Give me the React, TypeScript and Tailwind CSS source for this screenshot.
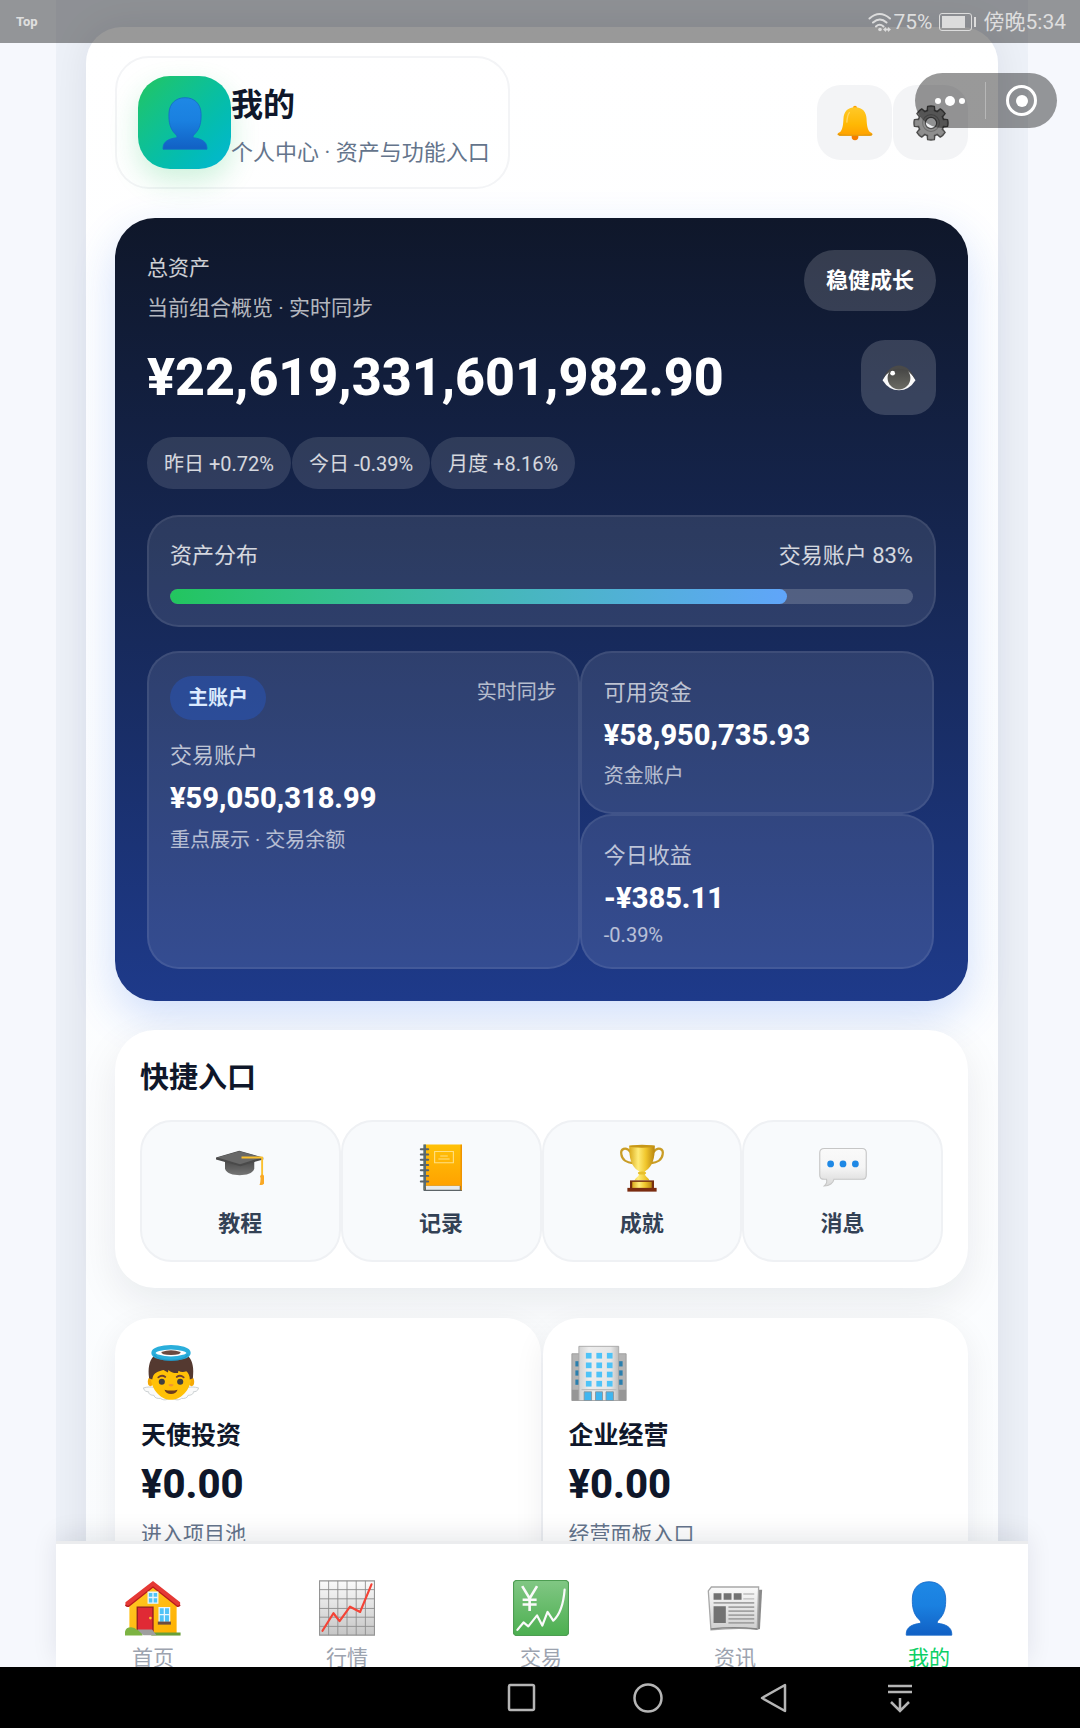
import React from "react";

type IconProps = { className?: string };

function PersonIcon({ className }: IconProps) {
  return (
    <svg viewBox="0 0 128 128" className={className} aria-hidden="true">
      <defs>
        <linearGradient id="person" x1="0" y1="0" x2="0" y2="1">
          <stop offset="0" stopColor="#1e88e5" />
          <stop offset=".45" stopColor="#1a80e0" />
          <stop offset="1" stopColor="#1160c4" />
        </linearGradient>
      </defs>
      <path
        d="M64 4c22 0 37 14 38 37 1 21-3 38-15 49-4 4-5 6-3 9 18 2 32 9 32 24v3H12v-3c0-15 14-22 32-24 2-3 1-5-3-9C29 79 25 62 26 41 27 18 42 4 64 4Z"
        fill="url(#person)"
        stroke="#1669c9"
        strokeWidth="2"
      />
    </svg>
  );
}

function BellIcon({ className }: IconProps) {
  return (
    <svg viewBox="0 0 128 128" className={className} aria-hidden="true">
      <defs>
        <linearGradient id="bell" x1="0" y1="0" x2="0" y2="1">
          <stop offset="0" stopColor="#ffc928" />
          <stop offset=".6" stopColor="#ffb804" />
          <stop offset="1" stopColor="#ffa000" />
        </linearGradient>
      </defs>
      <circle cx="64" cy="10" r="7" fill="#ffa000" />
      <circle cx="64" cy="113" r="12" fill="#f57c00" />
      <path
        d="M64 8c28 0 40 18 41 40 1 26 4 38 10 46 4 4 11 5 11 10 0 4-4 5-8 5H10c-4 0-8-1-8-5 0-5 7-6 11-10 6-8 9-20 10-46C24 26 36 8 64 8Z"
        fill="url(#bell)"
      />
      <path d="M3 102c20 5 102 5 122 0 1 5-3 7-7 7H10c-4 0-8-2-7-7Z" fill="#e09a10" />
      <path d="M44 27c-7 8-8 20-9 34" fill="none" stroke="#ffe082" strokeWidth="5" strokeLinecap="round" opacity=".7" />
    </svg>
  );
}

function GearIcon({ className }: IconProps) {
  const teeth = [0, 45, 90, 135, 180, 225, 270, 315];
  return (
    <svg viewBox="0 0 128 128" className={className} aria-hidden="true">
      <g fill="#858585" stroke="#4b4b4b" strokeWidth="5" strokeLinejoin="round">
        {teeth.map((a) => (
          <path key={a} d="M50 26 52 5q12-3 24 0l2 21Z" transform={`rotate(${a} 64 64)`} />
        ))}
        <circle cx="64" cy="64" r="46" />
      </g>
      <g fill="#8e8e8e">
        {teeth.map((a) => (
          <path key={a} d="M53 30 55 9h18l2 21Z" transform={`rotate(${a} 64 64)`} />
        ))}
      </g>
      <circle cx="64" cy="64" r="42" fill="#8e8e8e" />
      <circle cx="64" cy="64" r="30" fill="none" stroke="#707070" strokeWidth="4" />
      <circle cx="64" cy="64" r="20" fill="#f1f2f4" stroke="#505050" strokeWidth="4" />
    </svg>
  );
}

function EyeIcon({ className }: IconProps) {
  return (
    <svg viewBox="0 0 128 96" className={className} aria-hidden="true">
      <defs>
        <linearGradient id="iris" x1="0" y1="0" x2="0" y2="1">
          <stop offset="0" stopColor="#424242" />
          <stop offset="1" stopColor="#6b6b64" />
        </linearGradient>
      </defs>
      <path d="M2 56Q28 8 64 8t62 48Q102 94 64 94T2 56Z" fill="#fafafa" />
      <circle cx="64" cy="48" r="43" fill="url(#iris)" />
      <circle cx="40" cy="30" r="9" fill="#fff" />
      <path d="M2 54Q26 1 64 1t62 53Q102 14 64 13T2 54Z" fill="#4a4a49" />
    </svg>
  );
}

function GraduationIcon({ className }: IconProps) {
  return (
    <svg viewBox="0 0 128 128" className={className} aria-hidden="true">
      <defs>
        <linearGradient id="cap" x1="0" y1="0" x2="0" y2="1">
          <stop offset="0" stopColor="#424242" />
          <stop offset="1" stopColor="#757575" />
        </linearGradient>
      </defs>
      <path d="M24 38h78v28c-4 13-22 17-39 17S28 79 24 66Z" fill="url(#cap)" />
      <path d="M0 36 62 18l64 18v5L65 59 0 41Z" fill="#4a4a4a" />
      <path d="M4 36 62 19l60 17-58 18Z" fill="#686868" />
      <path d="M68 36h55v53" fill="none" stroke="#fbc02d" strokeWidth="5" strokeLinejoin="round" />
      <circle cx="123" cy="86" r="5" fill="#f9a825" />
      <path d="M119 86h9v20q-4 5-12 3 3-6 3-23Z" fill="#f9a825" />
    </svg>
  );
}

function NotebookIcon({ className }: IconProps) {
  const rings = [14, 28, 42, 56, 70, 85, 100];
  return (
    <svg viewBox="0 0 128 128" className={className} aria-hidden="true">
      <defs>
        <linearGradient id="book" x1="0" y1="0" x2="0" y2="1">
          <stop offset="0" stopColor="#ffc107" />
          <stop offset="1" stopColor="#ff9f00" />
        </linearGradient>
      </defs>
      <path d="M18 110h102v15H18Z" fill="#5d6468" />
      <path d="M24 111h90v11H24Z" fill="#e6eaec" />
      <path d="M18 1h102v110H24l-6 12Z" fill="url(#book)" />
      <path d="M17 1h7v110l-7 14Z" fill="#546e7a" />
      <path d="M116 2h4v121h-4Z" fill="#ef9300" />
      <g stroke="#5a6469" strokeWidth="5" strokeLinecap="round">
        {rings.map((y) => (
          <path key={y} d={`M10 ${y}h20`} />
        ))}
      </g>
      <path d="M47 20h50v30H47Z" fill="none" stroke="#ffe082" strokeWidth="3" />
      <path d="M62 32h20M57 40h30" stroke="#ffe082" strokeWidth="3" />
    </svg>
  );
}

function TrophyIcon({ className }: IconProps) {
  return (
    <svg viewBox="0 0 128 128" className={className} aria-hidden="true">
      <defs>
        <linearGradient id="gold" x1="0" y1="0" x2="1" y2="0">
          <stop offset="0" stopColor="#d9a91a" />
          <stop offset=".35" stopColor="#ffec78" />
          <stop offset=".65" stopColor="#f0c62c" />
          <stop offset="1" stopColor="#b98510" />
        </linearGradient>
      </defs>
      <g fill="none" stroke="#c99c25" strokeWidth="6">
        <path d="M34 22C20 4 6 14 9 28c2 14 15 22 30 23M94 22c14-18 28-8 25 6-2 14-15 22-30 23" />
      </g>
      <path d="M30 4h68c1 34-6 56-24 67-5 3-3 9 0 14 3 4 8 6 10 12H44c2-6 7-8 10-12 3-5 5-11 0-14C36 60 29 38 30 4Z" fill="url(#gold)" />
      <ellipse cx="64" cy="6" rx="34" ry="4" fill="#c79718" />
      <ellipse cx="64" cy="77" rx="11" ry="4" fill="#e8bf2c" />
      <path d="M32 97h64v24H32Z" fill="#78300f" />
      <path d="M25 117h78v10H25Z" fill="#7b2c10" />
      <path d="M38 101h52v16H38Z" fill="url(#gold)" />
    </svg>
  );
}

function SpeechIcon({ className }: IconProps) {
  return (
    <svg viewBox="0 0 128 128" className={className} aria-hidden="true">
      <defs>
        <linearGradient id="bubble" x1="0" y1="0" x2="0" y2="1">
          <stop offset="0" stopColor="#fafafa" />
          <stop offset=".5" stopColor="#f5f5f5" />
          <stop offset="1" stopColor="#d8d8d8" />
        </linearGradient>
      </defs>
      <path
        d="M14 12h101q11 0 11 11v60q0 11-11 11H40c-2 10-12 18-26 18 7-6 8-11 6-18h-6Q2 94 2 83V23q0-11 12-11Z"
        fill="url(#bubble)"
        stroke="#c6c6c6"
        strokeWidth="3"
      />
      <g fill="#1e88e5">
        <circle cx="31" cy="53" r="9" />
        <circle cx="64" cy="53" r="9" />
        <circle cx="97" cy="53" r="9" />
      </g>
    </svg>
  );
}

function AngelIcon({ className }: IconProps) {
  return (
    <svg viewBox="0 0 128 128" className={className} aria-hidden="true">
      <g fill="#fafafa" stroke="#c4c9cc" strokeWidth="2">
        <path d="M34 100C20 94 10 96 1 98c1 7 7 9 12 9-1 5 5 8 12 8 1 6 8 8 15 7 6 5 14 4 20 0Z" />
        <path d="M94 100c14-6 24-4 33-2-1 7-7 9-12 9 1 5-5 8-12 8-1 6-8 8-15 7-6 5-14 4-20 0Z" />
      </g>
      <ellipse cx="17" cy="84" rx="6" ry="10" fill="#f5a905" />
      <ellipse cx="111" cy="84" rx="6" ry="10" fill="#f5a905" />
      <path d="M17 62C17 34 34 20 64 20s47 14 47 42c2 37-22 63-47 63S15 99 17 62Z" fill="#ffc107" />
      <path d="M14 76C8 30 28 12 64 12s56 18 50 64l-7 3c0-8-3-15-8-19-7 3-13 2-18-1l-1 5c-9 1-17-2-22-7l-1 6-10-6c-8 2-19 5-23 12-2 4-2 6-3 10Z" fill="#543930" />
      <g fill="none" stroke="#6d4030" strokeWidth="4" strokeLinecap="round">
        <path d="M35 74q8-7 16-1M77 73q8-6 16 1" />
      </g>
      <circle cx="43" cy="84" r="7" fill="#404040" />
      <circle cx="85" cy="84" r="7" fill="#404040" />
      <path d="M58 91q6-4 12 0-1 4-6 4t-6-4Z" fill="#f19534" />
      <path d="M49 102q15 4 30 0-4 10-15 10t-15-10Z" fill="#6b3b1e" />
      <ellipse cx="64" cy="19" rx="35" ry="9" fill="#fff" />
      <path d="M42 16q22-8 44 0 1 7-22 7t-22-7Z" fill="#6a4a40" />
      <ellipse cx="64" cy="18" rx="40" ry="13" fill="none" stroke="#2aaedb" strokeWidth="10" />
      <path d="M25 22q10 13 39 13t39-13" fill="none" stroke="#1d93c4" strokeWidth="3" opacity=".7" />
    </svg>
  );
}

function OfficeIcon({ className }: IconProps) {
  return (
    <svg viewBox="0 0 128 128" className={className} aria-hidden="true">
      <defs>
        <linearGradient id="office" x1="0" y1="0" x2="1" y2="0">
          <stop offset="0" stopColor="#d2d2d2" />
          <stop offset=".25" stopColor="#ededed" />
          <stop offset=".8" stopColor="#e6e6e6" />
          <stop offset="1" stopColor="#bdbdbd" />
        </linearGradient>
      </defs>
      <path d="M2 20h124v107H2Z" fill="#b4b4b4" stroke="#9a9a9a" strokeWidth="2" />
      <path d="M2 102h124v25H2Z" fill="#969696" />
      <g fill="#2a7fae">
        {[37, 58, 79].map((y) => (
          <React.Fragment key={y}>
            <path d={`M10 ${y}h9v12h-9Z`} />
            <path d={`M109 ${y}h9v12h-9Z`} />
          </React.Fragment>
        ))}
      </g>
      <path d="M18 3h91v124H18Z" fill="url(#office)" stroke="#a5a5a5" strokeWidth="2" />
      <g fill="#4fc3f7">
        {[18, 40, 61, 82].map((y) =>
          [34, 58, 82].map((x) => <rect key={`${x}-${y}`} x={x} y={y} width="13" height="13" />)
        )}
      </g>
      <path d="M24 102h80" stroke="#bdbdbd" strokeWidth="3" />
      <g fill="#40b6f0" stroke="#8b9298" strokeWidth="2">
        <path d="M30 107h17v20H30ZM56 107h16v20H56ZM80 107h17v20H80Z" />
      </g>
    </svg>
  );
}

function HouseIcon({ className }: IconProps) {
  return (
    <svg viewBox="0 0 128 128" className={className} aria-hidden="true">
      <defs>
        <linearGradient id="wall" x1="0" y1="0" x2="1" y2="1">
          <stop offset="0" stopColor="#ffca28" />
          <stop offset="1" stopColor="#ffb000" />
        </linearGradient>
      </defs>
      <path d="M10 54 64 8l54 48v66H10Z" fill="url(#wall)" />
      <path d="M64 2 126 51v6q-3 5-8 2L64 16 10 59q-5 3-9-2v-6Z" fill="#e53935" />
      <path d="M1 57q4 5 9 2L64 16l54 43q5 3 8-2" fill="none" stroke="#b71c1c" strokeWidth="3" />
      <path d="M28 62h36v58H28Z" fill="#e02a35" stroke="#8f1c22" strokeWidth="3" />
      <circle cx="58" cy="87" r="3" fill="#ffca28" />
      <g fill="#4fc3f7" stroke="#e8f6fd" strokeWidth="3">
        <path d="M53 28h22v25H53ZM64 28v25M53 40h22M78 63h24v34H78ZM90 63v34M78 79h24" />
      </g>
      <path d="M75 95h30v7H75Z" fill="#6d4c41" />
      <path d="M60 120h67v7H60Z" fill="#689f38" />
      <path d="M0 127v-9q2-10 14-10 8 0 14 6 10-2 12 6v7Z" fill="#7cb342" />
      <path d="M28 113h34l10 13H42Z" fill="#9e9e9e" />
    </svg>
  );
}

function ChartIcon({ className }: IconProps) {
  return (
    <svg viewBox="0 0 128 128" className={className} aria-hidden="true">
      <defs>
        <linearGradient id="paper" x1="0" y1="0" x2="0" y2="1">
          <stop offset="0" stopColor="#fafafa" />
          <stop offset="1" stopColor="#c6c6c6" />
        </linearGradient>
      </defs>
      <path d="M1 2h126v124H1Z" fill="url(#paper)" stroke="#949494" strokeWidth="3" />
      <path
        d="M22 2v124M43 2v124M64 2v124M85 2v124M106 2v124M1 22h126M1 43h126M1 65h126M1 85h126M1 106h126"
        stroke="#8c8c8c"
        strokeWidth="2"
      />
      <path d="m8 116 25-40 14 18 24-33 23 12 26-63" fill="none" stroke="#f44336" strokeWidth="5" strokeLinejoin="round" strokeLinecap="round" />
    </svg>
  );
}

function YenChartIcon({ className }: IconProps) {
  return (
    <svg viewBox="0 0 128 128" className={className} aria-hidden="true">
      <defs>
        <linearGradient id="market" x1="0" y1="0" x2="0" y2="1">
          <stop offset="0" stopColor="#81c784" />
          <stop offset="1" stopColor="#4caf50" />
        </linearGradient>
      </defs>
      <rect x="1" y="1" width="126" height="126" rx="8" fill="url(#market)" stroke="#4d9d52" strokeWidth="3" />
      <g fill="none" stroke="#fafafa" strokeWidth="6">
        <path d="m21 14 17 28 17-28M38 41v30M22 45h32M22 56h32" />
        <path d="m10 114 14-17 11 9 20-25 12 23 12-31 13 20q22-20 26-71" strokeWidth="5" strokeLinecap="round" strokeLinejoin="round" />
      </g>
    </svg>
  );
}

function NewsIcon({ className }: IconProps) {
  return (
    <svg viewBox="0 0 128 128" className={className} aria-hidden="true">
      <defs>
        <linearGradient id="news" x1="0" y1="0" x2="0" y2="1">
          <stop offset="0" stopColor="#fafafa" />
          <stop offset="1" stopColor="#cfcfcf" />
        </linearGradient>
      </defs>
      <path d="M113 22h13l-5 90-10 2Z" fill="#8a8a8a" />
      <path d="M3 25 10 16h108l-3 96q-52-4-106 2Z" fill="url(#news)" stroke="#a8a8a8" strokeWidth="3" />
      <path d="M9 112q52-6 106 0" fill="none" stroke="#858585" strokeWidth="3" />
      <g fill="#727272">
        <path d="M15 30h18v15H15ZM38 30h18v15H38ZM61 30h18v15H61ZM15 60h28v38H15Z" />
      </g>
      <path d="M83 32h25M83 43h25" stroke="#bdbdbd" strokeWidth="3" />
      <path d="M15 52h93M49 62h59M49 71h59M49 80h59M49 89h59M49 98h59" stroke="#a2a2a2" strokeWidth="4" />
    </svg>
  );
}

function WifiIcon({ className }: IconProps) {
  return (
    <svg viewBox="0 0 24 20" className={className} aria-hidden="true">
      <g fill="none" stroke="#dcdcdc" strokeWidth="2" strokeLinecap="round">
        <path d="M1.500 6.500q10-9 20.500 0M5 10.500q7-6 13.500 0M8 14.500q3.500-3.500 7.500 0" />
      </g>
      <circle cx="12" cy="17.500" r="1.800" fill="#dcdcdc" />
      <path d="M15 17.500 18 15v1.500h2V15l3 2.500L20 20v-1.500h-2V20Z" fill="#dcdcdc" />
    </svg>
  );
}

const chips = ["昨日 +0.72%", "今日 -0.39%", "月度 +8.16%"];

const shortcuts = [
  { label: "教程", Icon: GraduationIcon },
  { label: "记录", Icon: NotebookIcon },
  { label: "成就", Icon: TrophyIcon },
  { label: "消息", Icon: SpeechIcon },
];

const ventures = [
  { title: "天使投资", amount: "¥0.00", note: "进入项目池", Icon: AngelIcon },
  { title: "企业经营", amount: "¥0.00", note: "经营面板入口", Icon: OfficeIcon },
];

const tabs = [
  { label: "首页", Icon: HouseIcon, active: false },
  { label: "行情", Icon: ChartIcon, active: false },
  { label: "交易", Icon: YenChartIcon, active: false },
  { label: "资讯", Icon: NewsIcon, active: false },
  { label: "我的", Icon: PersonIcon, active: true },
];

function StatusBar() {
  return (
    <div className="absolute inset-x-0 top-0 z-20 flex h-[43px] items-center justify-between bg-black/40 pr-3.5 pl-4 text-[#dedede]">
      <span className="text-[13px] leading-4 font-extrabold">Top</span>
      <div className="flex items-center text-[21px] leading-6">
        <WifiIcon className="mr-0.5 h-5 w-6" />
        <span>75%</span>
        <div className="ml-1.5 flex items-center">
          <div className="h-[18px] w-[33px] rounded-[3px] border border-[#dcdcdc] p-0.5">
            <div className="h-full w-[23px] bg-[#dcdcdc]" />
          </div>
          <div className="ml-0.5 h-2.5 w-0.5 bg-[#dcdcdc]" />
        </div>
        <span className="ml-2">傍晚5:34</span>
      </div>
    </div>
  );
}

function Capsule() {
  return (
    <div className="absolute right-[23px] top-[73px] z-20 flex h-[55px] w-[142px] items-center rounded-full bg-black/40">
      <button type="button" aria-label="更多" className="flex h-full w-[70px] items-center justify-center gap-1">
        <span className="size-1.5 rounded-full bg-white" />
        <span className="size-2.5 rounded-full bg-white" />
        <span className="size-1.5 rounded-full bg-white" />
      </button>
      <span className="h-[37px] w-px bg-white/30" />
      <button type="button" aria-label="关闭" className="flex h-full flex-1 items-center justify-center">
        <span className="flex size-[31px] items-center justify-center rounded-full border-3 border-white">
          <span className="size-3 rounded-full bg-white" />
        </span>
      </button>
    </div>
  );
}

function Header() {
  return (
    <header className="flex items-center justify-between">
      <div className="flex items-center rounded-[34px] border-2 border-[#f3f4f6] py-[18px] pr-[18px] pl-[21px]">
        <div className="flex size-[93px] items-center justify-center rounded-[32px] bg-linear-135 from-[#22c55e] to-[#06b6d4] shadow-[0_12px_28px_rgba(34,197,94,0.22)]">
          <PersonIcon className="size-[54px]" />
        </div>
        <div className="pt-2">
          <h1 className="text-[32px] leading-10 font-bold text-[#0f172a]">我的</h1>
          <p className="mt-3 text-[22px] leading-8 text-[#64748b]">个人中心 · 资产与功能入口</p>
        </div>
      </div>
      <div className="flex gap-px">
        <button type="button" aria-label="通知" className="flex size-[75px] items-center justify-center rounded-3xl bg-[#f3f4f6]">
          <BellIcon className="size-9" />
        </button>
        <button type="button" aria-label="设置" className="flex size-[75px] items-center justify-center rounded-3xl bg-[#f3f4f6]">
          <GearIcon className="size-9" />
        </button>
      </div>
    </header>
  );
}

type AccountCardProps = { title: string; amount: string; note: string; compact?: boolean };

function AccountCard({ title, amount, note, compact = false }: AccountCardProps) {
  return (
    <div className="rounded-[32px] border-2 border-white/8 bg-white/10 px-[22px] pt-6 pb-[21px]">
      <p className="text-[22px] leading-8 text-white/70">{title}</p>
      <p className="mt-2 text-[29px] leading-9 font-extrabold text-white">{amount}</p>
      <p className={`mt-2 text-[20px] text-white/65 ${compact ? "leading-[22px]" : "leading-[30px]"}`}>{note}</p>
    </div>
  );
}

function AssetCard() {
  return (
    <section className="mt-[29px] rounded-[40px] bg-linear-to-b from-[#0f172a] to-[#1e3a8a] p-8 shadow-[0_16px_44px_rgba(37,99,235,0.2)]">
      <div className="flex items-start justify-between">
        <div>
          <h2 className="text-[21px] leading-9 text-white/80">总资产</h2>
          <p className="mt-1 text-[21px] leading-9 text-white/70">当前组合概览 · 实时同步</p>
        </div>
        <span className="rounded-full bg-white/16 px-[22px] pt-[15px] pb-3.5 text-[22px] leading-8 font-bold text-white">稳健成长</span>
      </div>

      <div className="mt-3.5 flex items-center justify-between">
        <p className="text-[52px] leading-[60px] font-extrabold text-white">¥22,619,331,601,982.90</p>
        <button type="button" aria-label="隐藏金额" className="flex size-[75px] items-center justify-center rounded-3xl bg-white/16">
          <EyeIcon className="h-[26px] w-[34px]" />
        </button>
      </div>

      <div className="mt-[22px] flex gap-px">
        {chips.map((chip) => (
          <span key={chip} className="rounded-full bg-white/12 px-[17px] pt-[13px] pb-[11px] text-[20px] leading-7 text-white/80">
            {chip}
          </span>
        ))}
      </div>

      <div className="mt-[26px] rounded-[32px] border-2 border-white/8 bg-white/10 px-[21px] pt-[23px] pb-[21px]">
        <div className="flex justify-between text-[22px] leading-8 text-white/80">
          <span>资产分布</span>
          <span>交易账户 83%</span>
        </div>
        <div className="mt-[17px] h-[15px] overflow-hidden rounded-full bg-white/18">
          <div className="h-full w-[83%] rounded-full bg-linear-to-r from-[#22c55e] to-[#60a5fa]" />
        </div>
      </div>

      <div className="mt-6 grid grid-cols-[55fr_45fr] pr-0.5">
        <div className="rounded-[32px] border-2 border-white/8 bg-white/10 px-[21px] pt-[23px] pb-[21px]">
          <div className="flex items-start justify-between">
            <span className="rounded-full bg-[#2563eb]/30 px-[18px] py-2 text-[20px] leading-7 font-bold text-[#dbeafe]">
              主账户
            </span>
            <span className="text-[20px] leading-8 text-white/65">实时同步</span>
          </div>
          <p className="mt-5 text-[22px] leading-8 text-white/70">交易账户</p>
          <p className="mt-2 text-[29px] leading-9 font-extrabold text-white">¥59,050,318.99</p>
          <p className="mt-2 text-[20px] leading-8 text-white/65">重点展示 · 交易余额</p>
        </div>
        <div className="flex flex-col">
          <AccountCard title="可用资金" amount="¥58,950,735.93" note="资金账户" />
          <AccountCard title="今日收益" amount="-¥385.11" note="-0.39%" compact />
        </div>
      </div>
    </section>
  );
}

function Shortcuts() {
  return (
    <section className="mt-[29px] rounded-[40px] bg-white px-[25px] pt-7 pb-[26px] shadow-[0_14px_40px_rgba(15,23,42,0.08)]">
      <h2 className="text-[29px] leading-10 font-bold text-[#0f172a]">快捷入口</h2>
      <div className="mt-[22px] grid grid-cols-4">
        {shortcuts.map(({ label, Icon }) => (
          <button
            key={label}
            type="button"
            className="flex flex-col items-center rounded-[32px] border-2 border-[#eff1f4] bg-[#f8fafc] pt-[22px] pb-5"
          >
            <Icon className="size-12" />
            <span className="mt-4 text-[22px] leading-8 font-bold text-[#334155]">{label}</span>
          </button>
        ))}
      </div>
    </section>
  );
}

function Ventures() {
  return (
    <section className="mt-[30px] grid grid-cols-2 gap-0.5">
      {ventures.map(({ title, amount, note, Icon }) => (
        <a
          key={title}
          href="#"
          className="block rounded-[36px] bg-white px-[26px] py-[27px] shadow-[0_10px_32px_rgba(15,23,42,0.07)]"
        >
          <Icon className="ml-0.5 size-14" />
          <h3 className="mt-[19px] text-[25px] leading-8 font-bold text-[#0f172a]">{title}</h3>
          <p className="mt-2.5 text-[40px] leading-[46px] font-extrabold text-[#0f172a]">{amount}</p>
          <p className="mt-2.5 text-[21px] leading-8 text-[#64748b]">{note}</p>
        </a>
      ))}
    </section>
  );
}

function TabBar() {
  return (
    <nav className="relative z-10 mr-[52px] ml-14 h-[126px] shrink-0 border-t-3 border-[#ebecee] bg-white shadow-[0_-6px_24px_rgba(15,23,42,0.09)]">
      <ul className="flex h-full overflow-hidden pt-9 pr-0.5">
        {tabs.map(({ label, Icon, active }) => (
          <li key={label} className="flex-1">
            <a
              href="#"
              aria-current={active ? "page" : undefined}
              className={`flex flex-col items-center text-[21px] leading-7 ${active ? "text-[#0ccf66]" : "text-[#9ca3af]"}`}
            >
              <Icon className="size-14" />
              <span className="mt-2">{label}</span>
            </a>
          </li>
        ))}
      </ul>
    </nav>
  );
}

function SystemBar() {
  return (
    <div className="relative z-10 flex h-[61px] shrink-0 items-center justify-end gap-24 bg-black pr-[165px]">
      <button type="button" aria-label="最近任务">
        <svg viewBox="0 0 30 30" className="size-[30px]" fill="none" stroke="#b5b5b5" strokeWidth="2.500">
          <rect x="2" y="2" width="25" height="25" rx="1.500" />
        </svg>
      </button>
      <button type="button" aria-label="主屏幕">
        <svg viewBox="0 0 30 30" className="size-[30px]" fill="none" stroke="#b5b5b5" strokeWidth="2.500">
          <circle cx="15" cy="15" r="13.500" />
        </svg>
      </button>
      <button type="button" aria-label="返回">
        <svg viewBox="0 0 30 30" className="size-[30px]" fill="none" stroke="#b5b5b5" strokeWidth="2.500" strokeLinejoin="round">
          <path d="M26 2v26L3 15Z" />
        </svg>
      </button>
      <button type="button" aria-label="收起导航栏">
        <svg viewBox="0 0 30 30" className="size-[30px]" fill="none" stroke="#b5b5b5" strokeWidth="2.500">
          <path d="M3 3h24M3 9h24M15 15v13M6 19l9 9 9-9" />
        </svg>
      </button>
    </div>
  );
}

export default function App() {
  return (
    <div className="relative flex h-screen flex-col overflow-hidden bg-[#f6f8fd] font-[Roboto,'Noto_Sans_CJK_SC',sans-serif]">
      <StatusBar />
      <Capsule />
      <main className="min-h-0 flex-1 overflow-y-auto [scrollbar-width:none]">
        <div className="mr-[52px] ml-14 overflow-hidden bg-[#edf1f8] px-[30px] pt-[27px]">
          <div className="rounded-t-[36px] bg-linear-to-b from-white to-[#fafcfe] pt-[29px] pr-[30px] pb-10 pl-[29px] shadow-[0_0_40px_rgba(15,23,42,0.08)]">
            <Header />
            <AssetCard />
            <Shortcuts />
            <Ventures />
          </div>
        </div>
      </main>
      <TabBar />
      <SystemBar />
    </div>
  );
}
